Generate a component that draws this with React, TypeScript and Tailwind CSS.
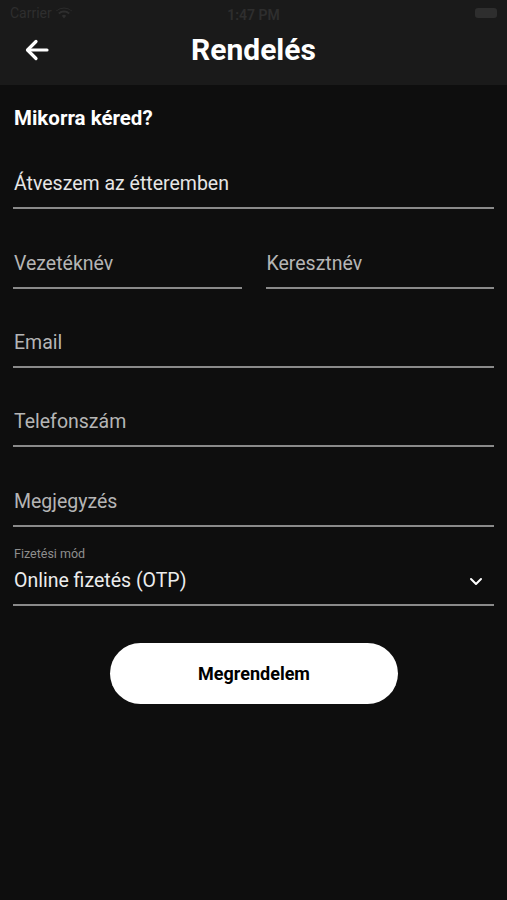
import React from "react";

function Field({ label, className = "", pt = "pt-[42px]" }: { label: string; className?: string; pt?: string }) {
  return (
    <div className={`${pt} pb-[11px] border-b-2 border-[#8a8a8a] ${className}`}>
      <div className="text-[19.5px] leading-[24px] text-[#b5b5b5] px-[1px]">{label}</div>
    </div>
  );
}

export default function App() {
  return (
    <div className="w-[507px] h-[900px] bg-[#0e0e0e] text-white" style={{ fontFamily: "Roboto, 'Noto Sans', sans-serif" }}>
      <div className="h-[85px] bg-[#1a1a1a] flex flex-col">
        <div className="h-[20px] relative flex items-center px-[10px] text-[14px] text-[#2e2e2e]">
          <div className="flex items-center gap-[4px] pt-[6px]">
            <span>Carrier</span>
            <svg width="16" height="12" viewBox="0 0 16 12" fill="#2e2e2e">
              <path d="M8 11.5l2.2-2.7a3.4 3.4 0 0 0-4.4 0z" />
              <path d="M8 5.5c1.8 0 3.4.6 4.6 1.7l1.2-1.5A9 9 0 0 0 8 3.5a9 9 0 0 0-5.8 2.2l1.2 1.5C4.6 6.1 6.2 5.5 8 5.5z" />
              <path d="M8 1.5c2.9 0 5.6 1 7.6 2.8L16 3.8A12 12 0 0 0 8 .5 12 12 0 0 0 0 3.8l.4.5A11 11 0 0 1 8 1.5z" />
            </svg>
          </div>
          <div className="absolute left-0 right-0 top-[5px] text-center font-semibold">1:47 PM</div>
          <div className="ml-auto pt-[6px]">
            <div className="w-[22px] h-[10px] rounded-[3px] bg-[#2e2e2e]" />
          </div>
        </div>
        <div className="h-[60px] relative flex items-center justify-center">
          <svg className="absolute left-[24px] top-[18px]" width="26" height="24" viewBox="0 0 26 24" fill="none" stroke="white" strokeWidth="3.2" strokeLinecap="round" strokeLinejoin="round">
            <path d="M23 12H4" />
            <path d="M12 3.5L3.5 12 12 20.5" />
          </svg>
          <div className="text-[30px] font-bold leading-none">Rendelés</div>
        </div>
      </div>
      <div className="px-[13px] pt-[21px]">
        <div className="text-[20.5px] leading-[24px] font-bold px-[1px]">Mikorra kéred?</div>
        <div className="pt-[42px] pb-[11px] border-b-2 border-[#8a8a8a]">
          <div className="text-[19.5px] leading-[24px] text-[#e6e6e6] px-[1px]">Átveszem az étteremben</div>
        </div>
        <div className="flex gap-[24px]">
          <Field label="Vezetéknév" className="flex-1" pt="pt-[43px]" />
          <Field label="Keresztnév" className="flex-1" pt="pt-[43px]" />
        </div>
        <Field label="Email" />
        <Field label="Telefonszám" />
        <Field label="Megjegyzés" pt="pt-[43px]" />
        <div className="pt-[19px] pb-[11px] border-b-2 border-[#8a8a8a]">
          <div className="text-[12.5px] leading-[16px] text-[#8e8e8e] px-[1px]">Fizetési mód</div>
          <div className="mt-[7px] flex items-center">
            <div className="text-[19.5px] leading-[24px] text-[#ececec] px-[1px]">Online fizetés (OTP)</div>
            <svg className="ml-auto mr-[11px]" width="14" height="10" viewBox="0 0 14 10" fill="none" stroke="white" strokeWidth="2" strokeLinecap="round" strokeLinejoin="round">
              <path d="M2 3l5 5 5-5" />
            </svg>
          </div>
        </div>
        <div className="flex justify-center mt-[37px]">
          <button className="w-[288px] h-[61px] rounded-full bg-white text-black text-[18px] font-bold ml-[1px]">Megrendelem</button>
        </div>
      </div>
    </div>
  );
}
